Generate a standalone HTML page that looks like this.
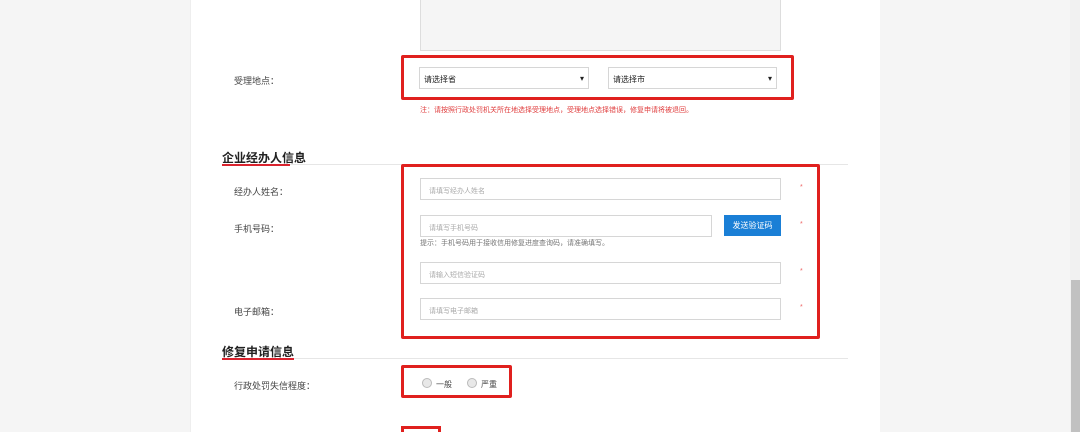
<!DOCTYPE html>
<html><head><meta charset="utf-8"><style>
*{margin:0;padding:0;box-sizing:border-box}
html,body{width:1080px;height:432px;overflow:hidden}
body{background:#f5f5f5;position:relative;font-family:"Liberation Sans","Noto Sans CJK SC",sans-serif;font-size:9px;color:#555}
.a{position:absolute}
.page{left:190px;top:0;width:690px;height:432px;background:#fff;border-left:1px solid #eee}
.lbl{font-size:9px;color:#444}
.inp{background:#fff;border:1px solid #d6d6d6;height:22px;font-size:7px;color:#aaa;padding:7px 8px}
.red{border:3px solid #e0201e;border-radius:2px}
.h{font-size:12px;font-weight:bold;color:#222}
.ul{height:2px;background:#d9232e}
.line{height:1px;background:#e6e6e6}
.star{color:#e66;font-size:7px}
.rad{width:10px;height:10px;border-radius:50%;border:1px solid #bbb;background:#e8e8e8}
</style></head><body>
<div class="a page"></div>
<div class="a" style="left:420px;top:0;width:361px;height:51px;background:#f5f5f5;border:1px solid #ddd;border-top:none"></div>
<div class="a lbl" style="left:234px;top:74px">受理地点：</div>
<div class="a red" style="left:401px;top:55px;width:393px;height:45px"></div>
<div class="a inp" style="left:419px;top:67px;width:170px;height:22px;color:#222;font-size:8px;padding:6px 4px">请选择省<span style="float:right">▾</span></div>
<div class="a inp" style="left:608px;top:67px;width:169px;height:22px;color:#222;font-size:8px;padding:6px 4px">请选择市<span style="float:right">▾</span></div>
<div class="a" style="left:420px;top:105px;color:#e04040;font-size:7px">注：请按照行政处罚机关所在地选择受理地点，受理地点选择错误，修复申请将被退回。</div>
<div class="a h" style="left:222px;top:149px">企业经办人信息</div>
<div class="a ul" style="left:222px;top:164px;width:68px"></div>
<div class="a line" style="left:290px;top:164px;width:558px"></div>
<div class="a red" style="left:401px;top:164px;width:419px;height:175px"></div>
<div class="a lbl" style="left:234px;top:185px">经办人姓名：</div>
<div class="a inp" style="left:420px;top:178px;width:361px">请填写经办人姓名</div>
<div class="a star" style="left:800px;top:184px">*</div>
<div class="a lbl" style="left:234px;top:222px">手机号码：</div>
<div class="a inp" style="left:420px;top:215px;width:292px">请填写手机号码</div>
<div class="a" style="left:724px;top:215px;width:57px;height:21px;background:#1a7fd6;color:#fff;font-size:8px;text-align:center;line-height:21px">发送验证码</div>
<div class="a star" style="left:800px;top:221px">*</div>
<div class="a" style="left:420px;top:238px;font-size:7px;color:#777">提示：手机号码用于接收信用修复进度查询码，请准确填写。</div>
<div class="a inp" style="left:420px;top:262px;width:361px">请输入短信验证码</div>
<div class="a star" style="left:800px;top:268px">*</div>
<div class="a lbl" style="left:234px;top:305px">电子邮箱：</div>
<div class="a inp" style="left:420px;top:298px;width:361px">请填写电子邮箱</div>
<div class="a star" style="left:800px;top:304px">*</div>
<div class="a h" style="left:222px;top:343px">修复申请信息</div>
<div class="a ul" style="left:222px;top:358px;width:72px"></div>
<div class="a line" style="left:294px;top:358px;width:554px"></div>
<div class="a lbl" style="left:234px;top:379px">行政处罚失信程度：</div>
<div class="a red" style="left:401px;top:365px;width:111px;height:33px"></div>
<div class="a rad" style="left:422px;top:378px"></div>
<div class="a" style="left:436px;top:379px;font-size:8px;color:#444">一般</div>
<div class="a rad" style="left:467px;top:378px"></div>
<div class="a" style="left:481px;top:379px;font-size:8px;color:#444">严重</div>
<div class="a" style="left:401px;top:426px;width:40px;height:6px;border:3px solid #e0201e;border-bottom:none"></div>
<div class="a" style="left:1070px;top:0;width:10px;height:432px;background:#f1f1f1"></div>
<div class="a" style="left:1071px;top:280px;width:9px;height:152px;background:#c1c1c1"></div>
</body></html>
